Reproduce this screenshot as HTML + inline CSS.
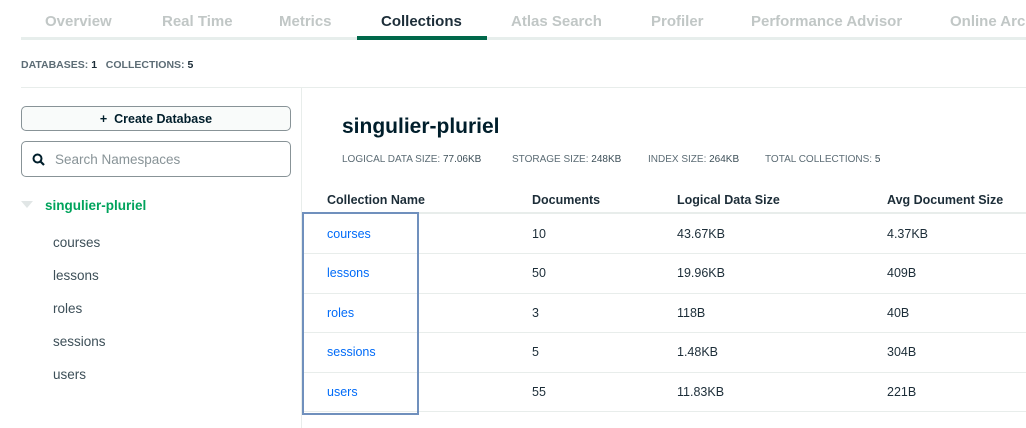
<!DOCTYPE html>
<html><head><style>
*{margin:0;padding:0;box-sizing:border-box}
body{width:1026px;height:428px;overflow:hidden;background:#fff;font-family:"Liberation Sans",sans-serif;position:relative;color:#1c2d38}
.a{position:absolute;white-space:nowrap}
.tab{top:13px;font-size:15px;font-weight:bold;color:#c1c7c6}
.hl{position:absolute;background:#e7eeec}
.st{font-size:10px;color:#5c6c75;top:154px}
.st b{color:#3d4f58;font-weight:normal}
.th{top:193px;font-size:12.5px;font-weight:bold;color:#1c2d38}
.row{position:absolute;left:302px;width:724px;height:1px;background:#e8edeb}
.c{font-size:12.5px;color:#1c2d38}
.lnk{color:#016bf8}
.side{left:53px;font-size:13.5px;color:#3d4f58}
</style></head><body>
<div class="a tab" style="left:45px">Overview</div>
<div class="a tab" style="left:162px">Real Time</div>
<div class="a tab" style="left:279px">Metrics</div>
<div class="a tab" style="left:381px;color:#1c2d38">Collections</div>
<div class="a tab" style="left:511px">Atlas Search</div>
<div class="a tab" style="left:651px">Profiler</div>
<div class="a tab" style="left:751px">Performance Advisor</div>
<div class="a tab" style="left:950px">Online Archive</div>
<div class="hl" style="left:21px;top:37px;width:1005px;height:3px"></div>
<div class="hl" style="left:357px;top:36px;width:130px;height:4px;background:#00684a"></div>
<div class="a" style="left:21px;top:59px;font-size:10.5px;font-weight:bold;color:#5c6c75">DATABASES: <span style="color:#1c2d38">1</span>&nbsp;&nbsp; COLLECTIONS: <span style="color:#1c2d38">5</span></div>
<div class="hl" style="left:21px;top:87px;width:1005px;height:1px;background:#e8edeb"></div>
<div class="hl" style="left:301px;top:88px;width:1px;height:340px;background:#e8edeb"></div>
<div class="a" style="left:21px;top:106px;width:270px;height:25px;border:1px solid #889397;border-radius:5px;background:#f9fbfa;font-size:12.5px;font-weight:bold;text-align:center;line-height:24px;color:#001e2b">+&nbsp; Create Database</div>
<div class="a" style="left:21px;top:141px;width:270px;height:36px;border:1px solid #889397;border-radius:5px;font-size:13.5px;color:#889397;line-height:35px;padding-left:33px">Search Namespaces
<svg style="position:absolute;left:10px;top:11px" width="13" height="13" viewBox="0 0 13 13"><circle cx="5.5" cy="5.5" r="4" fill="none" stroke="#001e2b" stroke-width="2"/><path d="M8.5 8.5L12 12" stroke="#001e2b" stroke-width="2.2"/></svg></div>
<svg class="a" style="left:21px;top:201px" width="12" height="8"><path d="M0 0h12L6 7z" fill="#e1e6e6"/></svg>
<div class="a" style="left:45px;top:198px;font-size:13.5px;font-weight:bold;color:#00a35c">singulier-pluriel</div>
<div class="a side" style="top:235px">courses</div>
<div class="a side" style="top:268px">lessons</div>
<div class="a side" style="top:301px">roles</div>
<div class="a side" style="top:334px">sessions</div>
<div class="a side" style="top:367px">users</div>
<div class="a" style="left:342px;top:115px;font-size:21px;font-weight:bold;color:#001e2b">singulier-pluriel</div>
<div class="a st" style="left:342px">LOGICAL DATA SIZE: <b>77.06KB</b></div>
<div class="a st" style="left:512px">STORAGE SIZE: <b>248KB</b></div>
<div class="a st" style="left:648px">INDEX SIZE: <b>264KB</b></div>
<div class="a st" style="left:765px">TOTAL COLLECTIONS: <b>5</b></div>
<div class="a th" style="left:327px">Collection Name</div>
<div class="a th" style="left:532px">Documents</div>
<div class="a th" style="left:677px">Logical Data Size</div>
<div class="a th" style="left:887px">Avg Document Size</div>
<div class="row" style="top:212px;height:2px"></div>
<div class="row" style="top:253px"></div>
<div class="row" style="top:293px"></div>
<div class="row" style="top:332px"></div>
<div class="row" style="top:372px"></div>
<div class="row" style="top:411px"></div>
<div class="a c lnk" style="left:327px;top:227px">courses</div><div class="a c" style="left:532px;top:227px">10</div><div class="a c" style="left:677px;top:227px">43.67KB</div><div class="a c" style="left:887px;top:227px">4.37KB</div>
<div class="a c lnk" style="left:327px;top:266px">lessons</div><div class="a c" style="left:532px;top:266px">50</div><div class="a c" style="left:677px;top:266px">19.96KB</div><div class="a c" style="left:887px;top:266px">409B</div>
<div class="a c lnk" style="left:327px;top:306px">roles</div><div class="a c" style="left:532px;top:306px">3</div><div class="a c" style="left:677px;top:306px">118B</div><div class="a c" style="left:887px;top:306px">40B</div>
<div class="a c lnk" style="left:327px;top:345px">sessions</div><div class="a c" style="left:532px;top:345px">5</div><div class="a c" style="left:677px;top:345px">1.48KB</div><div class="a c" style="left:887px;top:345px">304B</div>
<div class="a c lnk" style="left:327px;top:385px">users</div><div class="a c" style="left:532px;top:385px">55</div><div class="a c" style="left:677px;top:385px">11.83KB</div><div class="a c" style="left:887px;top:385px">221B</div>
<div class="a" style="left:302px;top:212px;width:117px;height:203px;border:2.5px solid #7090bd"></div>
</body></html>
